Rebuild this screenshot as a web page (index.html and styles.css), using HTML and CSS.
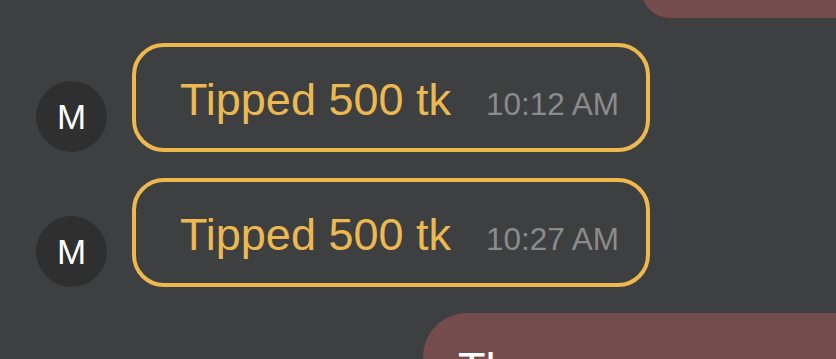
FILE: index.html
```html
<!DOCTYPE html>
<html lang="en">
  <head>
    <meta charset="UTF-8" />
    <meta name="viewport" content="width=device-width, initial-scale=1.0" />
    <title>Chat</title>
    <link rel="stylesheet" href="styles.css">
  </head>
  <body>
    <div class="chat">
      <div class="bubble-out top"></div>

      <div class="row">
        <div class="avatar">M</div>
        <div class="tip">
          <span class="tip-text">Tipped 500 tk</span>
          <span class="time">10:12 AM</span>
        </div>
      </div>

      <div class="row">
        <div class="avatar">M</div>
        <div class="tip">
          <span class="tip-text">Tipped 500 tk</span>
          <span class="time">10:27 AM</span>
        </div>
      </div>

      <div class="bubble-out bottom">Those are sooo cool</div>
    </div>
  </body>
</html>
```

FILE: styles.css
```css
* {
  margin: 0;
  padding: 0;
  box-sizing: border-box;
}

body {
  background-color: #3e3f41;
  font-family: "Liberation Sans", Arial, sans-serif;
  overflow: hidden;
}

.chat {
  display: flex;
  flex-direction: column;
  gap: 25px;
}

.bubble-out {
  background-color: #744c4c;
  color: #ffffff;
  align-self: flex-end;
}
.top {
  width: 195px;
  height: 58px;
  margin-top: -40px;
  border-radius: 44px 0 0 44px;
}
.bottom {
  width: 413px;
  height: 120px;
  margin-top: 1px;
  padding: 31px 0 0 35px;
  border-radius: 44px 0 0 0;
  font-size: 45px;
  line-height: 50px;
  white-space: nowrap;
  overflow: hidden;
}

.row {
  display: flex;
  align-items: flex-end;
  gap: 25px;
  padding-left: 36px;
}
.row + .row {
  margin-top: 1px;
}

.avatar {
  width: 71px;
  height: 71px;
  border-radius: 50%;
  background-color: #2e2f2e;
  color: #ffffff;
  font-size: 35px;
  display: flex;
  align-items: center;
  justify-content: center;
}

.tip {
  width: 518px;
  height: 109px;
  border: 4px solid #edb84e;
  border-radius: 32px;
  padding: 28px 29px 0 44px;
  display: flex;
  align-items: baseline;
  gap: 35px;
}
.tip-text {
  color: #ecb950;
  font-size: 45px;
  line-height: 50px;
  white-space: nowrap;
}
.time {
  color: #8b8b8b;
  font-size: 31.5px;
  white-space: nowrap;
}
```
